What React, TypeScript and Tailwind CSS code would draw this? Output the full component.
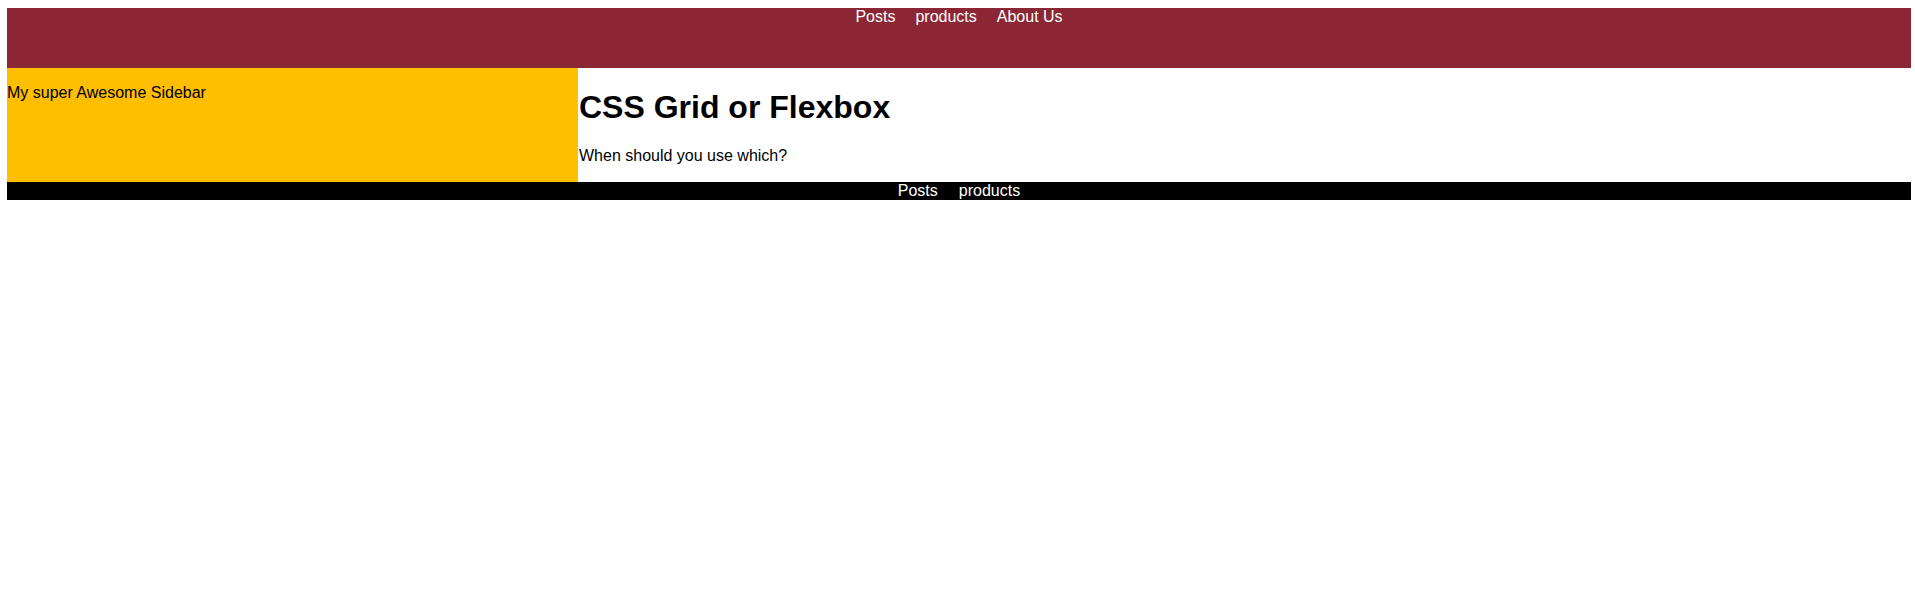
import React from 'react';

const links = ['Posts', 'products', 'About Us'];
const footerLinks = ['Posts', 'products'];

const App: React.FC = () => {
  return (
    <div className="min-h-screen bg-white pt-[8px] pl-[7px] pr-[4px] font-['Liberation_Sans',Arial,sans-serif] text-[16px] text-black">
      <div className="grid grid-cols-[571px_1fr]">
        <header className="col-span-2 h-[60px] bg-[#8b2635]">
          <nav className="flex justify-center gap-5 text-white leading-[18px]">
            {links.map((l) => (
              <a key={l} href="#">{l}</a>
            ))}
          </nav>
        </header>

        <aside className="bg-[#ffbf00] pt-[16px]">
          <p className="leading-[18px]">My super Awesome Sidebar</p>
        </aside>

        <main className="pl-[1px] pt-[21px] pb-[17px]">
          <h1 className="text-[32px] font-bold leading-[36px]">CSS Grid or Flexbox</h1>
          <p className="mt-[22px] leading-[18px]">When should you use which?</p>
        </main>

        <footer className="col-span-2 h-[18px] bg-black">
          <nav className="flex justify-center gap-[21px] text-white leading-[18px]">
            {footerLinks.map((l) => (
              <a key={l} href="#">{l}</a>
            ))}
          </nav>
        </footer>
      </div>
    </div>
  );
};

export default App;
